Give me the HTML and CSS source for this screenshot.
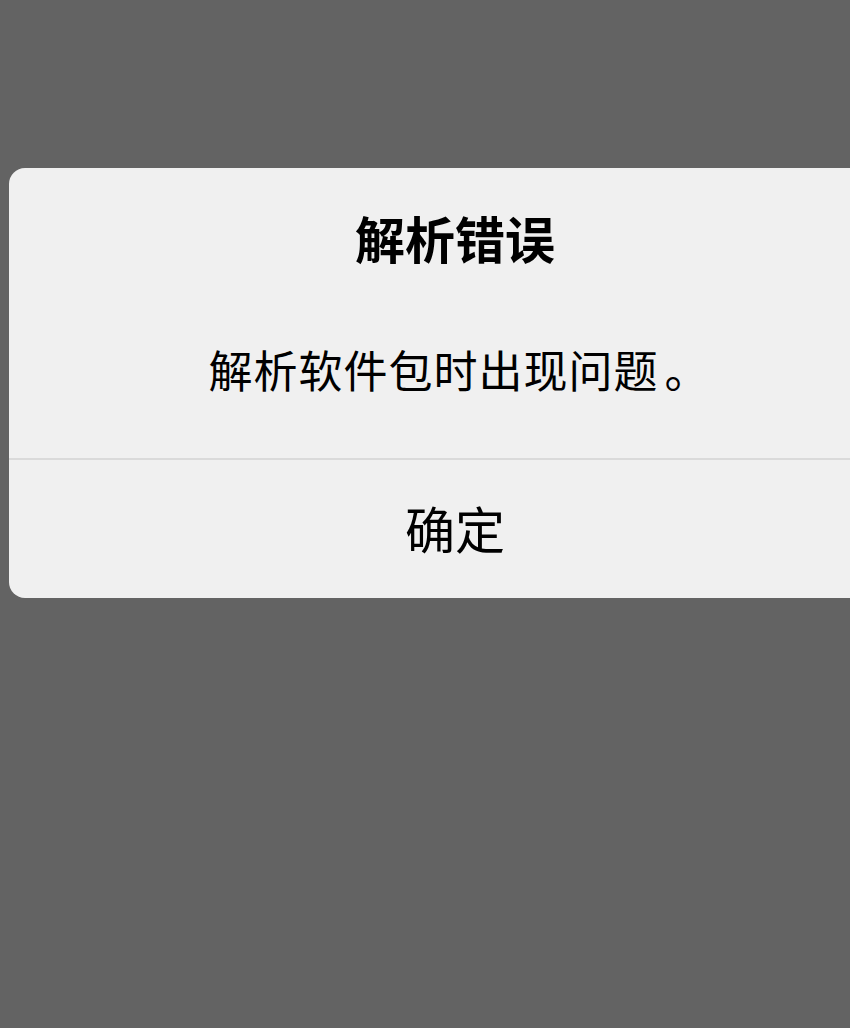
FILE: index.html
```html
<!DOCTYPE html>
<html lang="zh-CN">
<head>
<meta charset="utf-8">
<link rel="stylesheet" href="styles.css">
</head>
<body>
<div class="screen">
  <div class="dialog">
    <div class="title">解析错误</div>
    <div class="message">解析软件包时出现问题<span class="stop">。</span></div>
    <div class="divider"></div>
    <div class="button">确定</div>
  </div>
</div>
</body>
</html>
```

FILE: styles.css
```css
html, body {
  margin: 0;
  padding: 0;
  background: #636363;
  overflow: hidden;
}
.screen {
  width: 850px;
  height: 1028px;
  overflow: hidden;
  padding-top: 168px;
  box-sizing: border-box;
  font-family: "Noto Sans CJK SC", "Noto Sans", sans-serif;
  color: #000;
}
.dialog {
  margin-left: 9px;
  width: 892px;
  background: #f0f0f0;
  border-radius: 16px;
  display: flex;
  flex-direction: column;
  align-items: stretch;
}
.title {
  font-size: 50px;
  line-height: 50px;
  font-weight: 700;
  text-align: center;
  padding-top: 44px;
}
.message {
  font-size: 44px;
  line-height: 44px;
  letter-spacing: 1px;
  text-align: center;
  padding-top: 85px;
  padding-bottom: 67px;
  padding-left: 8px;
}
.stop {
  margin-left: 6px;
}
.divider {
  height: 2px;
  background: #dadada;
}
.button {
  height: 134px;
  padding-bottom: 4px;
  font-size: 50px;
  line-height: 134px;
  text-align: center;
}
```
